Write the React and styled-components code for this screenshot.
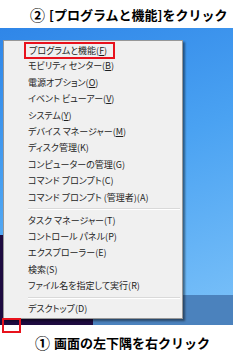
import React from 'react';
import styled, { createGlobalStyle } from 'styled-components';

const Global = createGlobalStyle`
  html, body { margin: 0; padding: 0; background: #ffffff; }
  body { font-family: "Noto Sans CJK JP", "Noto Sans", sans-serif; }
`;

const Page = styled.div`
  width: 242px;
  height: 359px;
  background: #ffffff;
  display: flex;
  flex-direction: column;
  overflow: hidden;
`;

const Caption = styled.div`
  height: ${p => p.h}px;
  display: flex;
  align-items: center;
  padding-left: ${p => p.indent}px;
  font-family: "Noto Sans CJK JP", sans-serif;
  font-weight: bold;
  font-size: 13px;
  color: #000000;
  white-space: nowrap;
  letter-spacing: 0;
`;

const Num = styled.span`
  font-size: 15px;
  margin-right: 4px;
`;

const Screen = styled.div`
  position: relative;
  width: 233px;
  height: 297px;
  display: flex;
  flex-direction: column;
  background: linear-gradient(160deg, #2f86e8 0%, #4aa2f2 45%, #7cc2f9 100%);
`;

const Spacer = styled.div`
  flex: 1;
`;

const Taskbar = styled.div`
  height: 30px;
  background: #4b82bd;
`;

const StartThumb = styled.div`
  position: absolute;
  left: 0;
  bottom: 0;
  width: 93px;
  height: 90px;
  background: #1e0b40;
`;

const Menu = styled.div`
  position: absolute;
  left: 3px;
  top: 12px;
  width: 180px;
  box-sizing: border-box;
  padding: 1px 0;
  background: #f0f0f0;
  border: 1px solid #979797;
  box-shadow: 2px 2px 2px rgba(0, 0, 0, 0.45);
  font-family: "Noto Sans CJK JP", sans-serif;
  font-feature-settings: "palt";
  font-size: 9px;
  color: #1e1e1e;
`;

const Item = styled.div`
  height: 16.4px;
  line-height: 16.4px;
  padding-left: 24px;
  white-space: nowrap;
`;

const Marked = styled.span`
  display: inline-block;
  box-sizing: border-box;
  width: 91px;
  height: 17px;
  line-height: 13px;
  margin-left: -4px;
  padding-left: 3px;
  border: 2px solid #e8121c;
  vertical-align: middle;
`;

const Key = styled.span`
  text-decoration: ${p => (p.u ? 'underline' : 'none')};
`;

const Separator = styled.div`
  height: 1px;
  margin: 2.3px 2px 2.3px 24px;
  background: #d9d9d9;
  border-bottom: 1px solid #ffffff;
`;

const CornerMark = styled.div`
  position: absolute;
  left: 2px;
  top: 290px;
  width: 19px;
  height: 15px;
  box-sizing: border-box;
  border: 2px solid #e8121c;
`;

const groups = [
  [
    ['プログラムと機能', 'F', true, true],
    ['モビリティ センター', 'B', true],
    ['電源オプション', 'O', true],
    ['イベント ビューアー', 'V', true],
    ['システム', 'Y', true],
    ['デバイス マネージャー', 'M', true],
    ['ディスク管理', 'K'],
    ['コンピューターの管理', 'G'],
    ['コマンド プロンプト', 'C'],
    ['コマンド プロンプト (管理者)', 'A'],
  ],
  [
    ['タスク マネージャー', 'T'],
    ['コントロール パネル', 'P'],
    ['エクスプローラー', 'E'],
    ['検索', 'S'],
    ['ファイル名を指定して実行', 'R'],
  ],
  [['デスクトップ', 'D']],
];

const Label = ({ text, k, u }) => (
  <>
    {text}(<Key u={u}>{k}</Key>)
  </>
);

export default function App() {
  return (
    <Page>
      <Global />
      <Caption h={28} indent={30}>
        <Num>②</Num>[プログラムと機能]をクリック
      </Caption>
      <Screen>
        <Spacer />
        <Taskbar />
        <StartThumb />
        <Menu>
          {groups.map((g, gi) => (
            <React.Fragment key={gi}>
              {gi > 0 && <Separator />}
              {g.map(([text, k, u, marked]) => (
                <Item key={text}>
                  {marked ? (
                    <Marked>
                      <Label text={text} k={k} u={u} />
                    </Marked>
                  ) : (
                    <Label text={text} k={k} u={u} />
                  )}
                </Item>
              ))}
            </React.Fragment>
          ))}
        </Menu>
        <CornerMark />
      </Screen>
      <Caption h={34} indent={35}>
        <Num>①</Num>画面の左下隅を右クリック
      </Caption>
    </Page>
  );
}
